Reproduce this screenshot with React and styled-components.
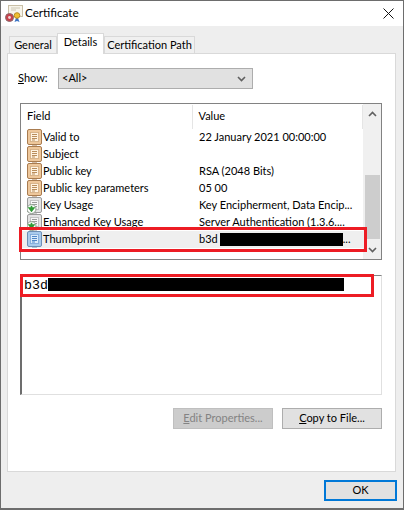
import React from 'react';
import styled, { createGlobalStyle } from 'styled-components';

const Global = createGlobalStyle`
    html, body {
        margin: 0;
        padding: 0;
        background: #fff;
    }
    body {
        font-family: Lato, "Noto Sans", sans-serif;
        font-size: 11px;
        color: #000;
    }
`;

const Window = styled.div`
    position: relative;
    box-sizing: border-box;
    width: 404px;
    height: 510px;
    border: 1px solid #6d6d6d;
    border-bottom-width: 2px;
    background: #eee;
    display: flex;
    flex-direction: column;
`;

const TitleBar = styled.div`
    height: 25px;
    flex: none;
    background: #fff;
    display: flex;
    align-items: center;
    padding: 0 4px;
    gap: 1px;
    font-size: 11.7px;
`;

const TitleText = styled.span`
    flex: 1;
    margin-bottom: 3px;
`;

const Close = styled.svg`
    width: 11px;
    height: 11px;
    margin-right: 5px;
`;

const TabBar = styled.div`
    display: flex;
    align-items: flex-end;
    height: 21px;
    padding: 7px 0 0 8px;
    flex: none;
    position: relative;
    z-index: 1;
    margin-bottom: -1px;
`;

const Tab = styled.div`
    box-sizing: border-box;
    width: ${p => p.$width}px;
    height: ${p => (p.$active ? 21 : 18)}px;
    border: 1px solid #d9d9d9;
    border-bottom: ${p => (p.$active ? 'none' : '1px solid #d9d9d9')};
    background: ${p => (p.$active ? '#fff' : '#f0f0f0')};
    text-align: center;
    line-height: ${p => (p.$active ? 15 : 16)}px;
    white-space: nowrap;
`;

const Panel = styled.div`
    box-sizing: border-box;
    margin: 0 7px 0 6px;
    width: 389px;
    height: 419px;
    flex: none;
    background: #fff;
    border: 1px solid #d9d9d9;
    padding: 14px 13px 0 12px;
    display: flex;
    flex-direction: column;
`;

const ShowRow = styled.div`
    display: flex;
    align-items: center;
    height: 21px;
`;

const ShowLabel = styled.label`
    width: 40px;
    margin-left: -2px;
    margin-bottom: 2px;
`;

const Select = styled.div`
    box-sizing: border-box;
    width: 195px;
    height: 21px;
    border: 1px solid #adadad;
    background: #e1e1e1;
    display: flex;
    align-items: center;
    justify-content: space-between;
    padding: 0 6px 0 3px;
`;

const SelectValue = styled.span`
    margin-bottom: 2px;
`;

const Chevron = styled.svg`
    width: 9px;
    height: 6px;
`;

const ListBox = styled.div`
    box-sizing: border-box;
    margin-top: 14px;
    height: 157px;
    border: 1px solid #828282;
    display: flex;
`;

const ListMain = styled.div`
    flex: 1;
    min-width: 0;
`;

const ListHeader = styled.div`
    height: 25px;
    display: flex;
    align-items: center;
`;

const HeaderCell = styled.div`
    box-sizing: border-box;
    width: ${p => p.$width}px;
    height: 24px;
    line-height: 22px;
    padding-left: 6px;
    border-right: 1px solid #e5e5e5;
`;

const Row = styled.div`
    display: flex;
    align-items: center;
    height: 17px;
    white-space: nowrap;
    background: ${p => (p.$selected ? '#efefef' : 'transparent')};
`;

const FieldCell = styled.div`
    width: 172px;
    flex: none;
    display: flex;
    align-items: center;
    gap: 1px;
    padding-left: 6px;
    box-sizing: border-box;
`;

const FieldName = styled.span`
    margin-bottom: 2px;
`;

const ValueCell = styled.div`
    padding-left: 6px;
    margin-bottom: 2px;
`;

const Redaction = styled.span`
    display: inline-block;
    width: ${p => p.$width}px;
    height: 13px;
    margin-left: ${p => p.$gap || 0}px;
    background: #000;
    vertical-align: ${p => p.$drop}px;
`;

const ScrollBar = styled.div`
    width: 18px;
    flex: none;
    background: #f0f0f0;
    display: flex;
    flex-direction: column;
    align-items: center;
    justify-content: space-between;
    padding: 7px 0 6px;
    box-sizing: border-box;
`;

const ScrollThumb = styled.div`
    width: 15px;
    height: 64px;
    background: #cdcdcd;
    margin-top: 49px;
`;

const DetailBox = styled.div`
    box-sizing: border-box;
    margin-top: 15px;
    height: 120px;
    border: 1px solid #e0e0e0;
    border-top-color: #828282;
    border-left: 2px solid #6d6d6d;
    padding: 2px 0 0 2px;
    font-family: "Liberation Mono", monospace;
    font-size: 13.33px;
    line-height: 15px;
`;

const ButtonRow = styled.div`
    display: flex;
    justify-content: flex-end;
    gap: 9px;
    margin-top: 13px;
`;

const Button = styled.div`
    box-sizing: border-box;
    width: ${p => p.$width || 100}px;
    height: 21px;
    text-align: center;
    border: ${p => (p.$default ? '2px solid #0078d7' : `1px solid ${p.$disabled ? '#bfbfbf' : '#adadad'}`)};
    line-height: ${p => (p.$default ? 15 : 17)}px;
    background: ${p => (p.$disabled ? '#ccc' : '#e1e1e1')};
    color: ${p => (p.$disabled ? '#838383' : '#000')};
`;

const Footer = styled.div`
    flex: 1;
    display: flex;
    justify-content: flex-end;
    padding: 8px 6px 0 0;
`;

// red annotation boxes drawn over the screenshot
const Marker = styled.div`
    position: absolute;
    box-sizing: border-box;
    left: ${p => p.$left}px;
    top: ${p => p.$top}px;
    width: ${p => p.$width}px;
    height: ${p => p.$height}px;
    border: 3px solid #ed1c24;
`;

const SealIcon = () => (
    <svg width="19" height="18" viewBox="0 0 19 18">
        <rect x="3.5" y="0.5" width="14" height="11" fill="#f7f4ea" stroke="#c9bfa6" />
        <path d="M6 3h9M6 5h5" stroke="#cfc8b4" />
        <circle cx="4.5" cy="12.5" r="4" fill="#c8414a" stroke="#8a6a6e" />
        <circle cx="4.5" cy="12.5" r="1.4" fill="#f3d6d8" />
        <path d="M11 13l-1.5 4 2.5-1 2.5 1L13 13z" fill="#3b73c4" />
        <circle cx="12" cy="10.5" r="2.8" fill="#f0c030" stroke="#b98a20" />
    </svg>
);

const palettes = {
    orange: { edge: '#a97c50', fill: '#eec79b', page: '#fff3e2', line: '#b98d5c' },
    gray: { edge: '#9a9a9a', fill: '#e3e3e3', page: '#f7f7f7', line: '#9a9a9a' },
    blue: { edge: '#6d8fb5', fill: '#a9cbec', page: '#dcecfb', line: '#4f86c6' },
};

const FieldIcon = ({ kind, arrow }) => {
    const c = palettes[kind];
    return (
        <svg width="15" height="17" viewBox="0 0 15 17">
            <rect x="0.5" y="0.5" width="14" height="15" rx="1.5" fill={c.fill} stroke={c.edge} />
            <rect x="3.5" y="3.5" width="8" height="9" fill={c.page} stroke={c.line} strokeOpacity="0.5" />
            <path d="M5 5.5h5M5 7.5h5M5 9.5h5M5 11h3" stroke={c.line} strokeWidth="1" />
            <rect x="5" y="15.5" width="5" height="1" fill={c.edge} />
            {arrow && (
                <>
                    <circle cx="4.5" cy="12" r="4.5" fill="#fff" stroke="#8a9a8a" />
                    <path d="M4.5 8.8v4.4M2.2 11l2.3 3 2.3-3z" stroke="#2f9a35" strokeWidth="1.6" fill="#2f9a35" />
                </>
            )}
        </svg>
    );
};

const Arrow = ({ up }) => (
    <Chevron viewBox="0 0 9 6">
        <path d={up ? 'M1 5l3.5-3.5L8 5' : 'M1 1l3.5 3.5L8 1'} fill="none" stroke="#606060" strokeWidth="1.6" />
    </Chevron>
);

const rows = [
    { field: 'Valid to', value: '22 January 2021 00:00:00', kind: 'orange' },
    { field: 'Subject', value: '', kind: 'orange' },
    { field: 'Public key', value: 'RSA (2048 Bits)', kind: 'orange' },
    { field: 'Public key parameters', value: '05 00', kind: 'orange' },
    { field: 'Key Usage', value: 'Key Encipherment, Data Encip...', kind: 'gray', arrow: true },
    { field: 'Enhanced Key Usage', value: 'Server Authentication (1.3.6....', kind: 'gray', arrow: true },
];

const App = () => {
    return (
        <>
            <Global />
            <Window>
                <TitleBar>
                    <SealIcon />
                    <TitleText>Certificate</TitleText>
                    <Close viewBox="0 0 11 11">
                        <path d="M0.5 0.5l10 10M10.5 0.5l-10 10" stroke="#111" fill="none" />
                    </Close>
                </TitleBar>
                <TabBar>
                    <Tab $width={48}>General</Tab>
                    <Tab $width={47} $active>Details</Tab>
                    <Tab $width={91}>Certification Path</Tab>
                </TabBar>
                <Panel>
                    <ShowRow>
                        <ShowLabel><u>S</u>how:</ShowLabel>
                        <Select>
                            <SelectValue>&lt;All&gt;</SelectValue>
                            <Arrow />
                        </Select>
                    </ShowRow>
                    <ListBox>
                        <ListMain>
                            <ListHeader>
                                <HeaderCell $width={172}>Field</HeaderCell>
                                <HeaderCell $width={171}>Value</HeaderCell>
                            </ListHeader>
                            {rows.map(r => (
                                <Row key={r.field}>
                                    <FieldCell>
                                        <FieldIcon kind={r.kind} arrow={r.arrow} />
                                        <FieldName>{r.field}</FieldName>
                                    </FieldCell>
                                    <ValueCell>{r.value}</ValueCell>
                                </Row>
                            ))}
                            <Row $selected>
                                <FieldCell>
                                    <FieldIcon kind="blue" />
                                    <FieldName>Thumbprint</FieldName>
                                </FieldCell>
                                <ValueCell>b3d<Redaction $width={123} $gap={2} $drop={-3} />...</ValueCell>
                            </Row>
                        </ListMain>
                        <ScrollBar>
                            <Arrow up />
                            <ScrollThumb />
                            <Arrow />
                        </ScrollBar>
                    </ListBox>
                    <DetailBox>
                        b3d<Redaction $width={296} $drop={-2} />
                    </DetailBox>
                    <ButtonRow>
                        <Button $disabled><u>E</u>dit Properties...</Button>
                        <Button><u>C</u>opy to File...</Button>
                    </ButtonRow>
                </Panel>
                <Footer>
                    <Button $default $width={73}>OK</Button>
                </Footer>
                <Marker $left={18} $top={226} $width={348} $height={25} />
                <Marker $left={19} $top={273} $width={354} $height={23} />
            </Window>
        </>
    );
};

export default App;
